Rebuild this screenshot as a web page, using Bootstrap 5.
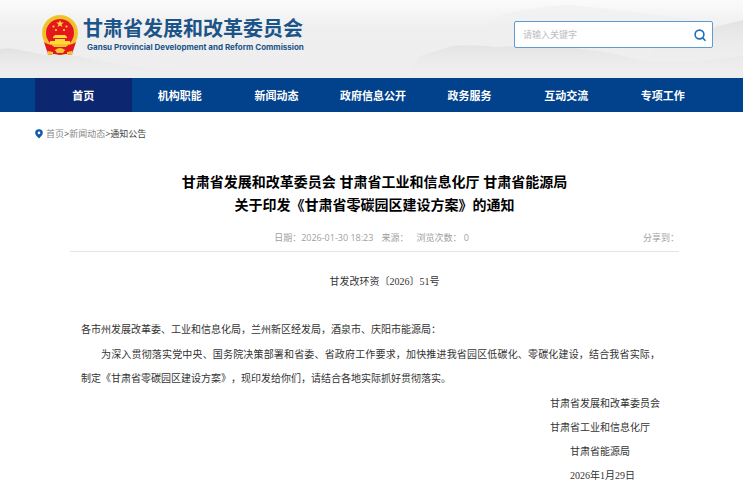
<!DOCTYPE html>
<html lang="zh-CN">
<head>
<meta charset="utf-8">
<meta name="viewport" content="width=device-width, initial-scale=1">
<title>甘肃省发展和改革委员会</title>
<link href="https://cdn.jsdelivr.net/npm/bootstrap@5.3.0/dist/css/bootstrap.min.css" rel="stylesheet">
<style>
  body { font-family: "Open Sans", "Noto Sans CJK SC", sans-serif; font-size: 9px; line-height: 12px; color: #333; background: #fff; text-spacing-trim: space-all; }
  .wrap { padding-left: 35px; padding-right: 30px; }
  .site-head { height: 78px; background: linear-gradient(#fbfbfb, #efefef 35%, #eeeeee); }
  .hills { z-index: 0; }
  .brand { color: #1a5488; padding-left: 6px; gap: 4px; margin-top: -8px; }
  .brand:hover { color: #1a5488; }
  .brand-cn { font-family: "Noto Sans CJK SC", sans-serif; font-size: 20px; line-height: 24px; font-weight: 700; }
  .brand-en { font-family: Inter, "Liberation Sans", sans-serif; font-size: 8px; line-height: 14px; font-weight: 700; padding-left: 4px; }
  .search { width: 199px; height: 27px; border: 1px solid #5e9bd0; border-radius: 2px; margin-top: -9px; }
  .search input { font-size: 9px; padding: 0 8px; color: #555; }
  .search input::placeholder { color: #bdbdbd; opacity: 1; }
  .search button { padding: 0 6px; }
  .main-nav { background: #02428d; padding-right: 32px; }
  .main-nav .nav-link { color: #fff; font-family: "Noto Sans CJK SC", sans-serif; font-size: 11px; line-height: 16px; padding: 9px 0; font-weight: 700; }
  .main-nav .nav-link.active { background: #0c2770; }
  .crumbs { padding-top: 16px; gap: 3px; }
  .crumbs a { color: #888; }
  .crumbs nav { color: #444; }
  .doc { padding: 30px 34px 0 35px; }
  .doc h1 { font-size: 14px; line-height: 23px; font-weight: 700; color: #000; }
  .meta { display: grid; grid-template-columns: 1fr auto 1fr; color: #a0a0a0; padding: 16px 0 7px; border-bottom: 1px solid #e4e4e4; }
  .meta-items { gap: 8px; padding-right: 6px; }
  .doc-text { font-family: "Liberation Serif", "Noto Sans CJK SC", serif; font-size: 10px; line-height: 24px; color: #333; padding-top: 18px; }
  .doc-text p { margin: 0; }
  .doc-no, .indent { text-indent: 2em; }
  .doc-main { padding: 24px 19px 0 11px; gap: 1px; }
  .indent { text-align: justify; }
  .signed { width: fit-content; }
</style>
</head>
<body>
<header class="site-head position-relative">
  <svg class="hills position-absolute top-0 start-0 w-100 h-100" viewBox="0 0 743 78" preserveAspectRatio="none" aria-hidden="true">
    <defs>
      <linearGradient id="mist" x1="0" y1="0" x2="0" y2="1"><stop offset="0" stop-color="#dcdcdc"/><stop offset="1" stop-color="#eeeeee" stop-opacity="0"/></linearGradient>
    </defs>
    <g fill="url(#mist)">
      <path d="M0 49Q12 47 25 51L45 55Q70 53 100 61L140 67L180 71V78H0Z" opacity=".7"/>
      <path d="M420 56Q440 50 452 46Q475 44 495 47L540 45Q580 48 610 53L650 62L700 61L743 56V78H400Z" opacity=".6"/>
      <path d="M660 42L700 32Q718 26 743 20V65H640Z" opacity=".7"/>
      <path d="M500 15Q540 6 570 5Q610 9 650 14L700 20V35H480Z" opacity=".25"/>
    </g>
  </svg>
  <div class="wrap h-100 d-flex align-items-center justify-content-between position-relative">
    <a class="brand d-flex align-items-center text-decoration-none" href="#">
      <svg width="38" height="42" viewBox="0 0 38 42" aria-hidden="true">
        <path d="M5 28H33L31 41L25 40L19 41L13 40L7 41Z" fill="#e0161c"/>
        <ellipse cx="19" cy="19" rx="18" ry="18" fill="#f4c52d"/>
        <circle cx="19" cy="19" r="16" fill="none" stroke="#e9b424" stroke-width="1" stroke-dasharray="2 1"/>
        <circle cx="19" cy="19" r="14" fill="#e5161d"/>
        <path d="M19 6l1 2.6h2.8l-2.2 1.7.8 2.7-2.4-1.6-2.4 1.6.8-2.7-2.2-1.7H18Z" fill="#ffd936"/>
        <g fill="#ffd936"><circle cx="12.5" cy="12.5" r="1.1"/><circle cx="25.5" cy="12.5" r="1.1"/><circle cx="15" cy="16" r="1.1"/><circle cx="23" cy="16" r="1.1"/>
        <path d="M12 23l2-2h10l2 2v1H12ZM14 25h10v2h5v3H9v-3h5Z"/></g>
        <path d="M3 28Q8 32 14 31Q19 35 24 31Q30 32 35 28L32 37Q25 37 19 35Q13 37 6 37Z" fill="#e5161d"/>
        <path d="M10 30H28L25 33H13Z" fill="#f2c32c"/>
        <path d="M14 36Q19 32 24 36L22 39H16Z" fill="#f4c52d"/>
        <path d="M7 37l5 1v2l-5 1ZM31 37l-5 1v2l5 1Z" fill="#f4c52d"/>
      </svg>
      <span class="d-flex flex-column">
        <span class="brand-cn">甘肃省发展和改革委员会</span>
        <span class="brand-en">Gansu Provincial Development and Reform Commission</span>
      </span>
    </a>
    <form class="search d-flex bg-white" role="search">
      <input class="form-control border-0 bg-transparent shadow-none" type="text" placeholder="请输入关键字" aria-label="请输入关键字">
      <button class="btn border-0 d-flex align-items-center" type="button" aria-label="搜索">
        <svg width="12" height="12" viewBox="0 0 12 12" fill="none" stroke="#1c6fb9" stroke-width="1.6"><circle cx="5.5" cy="5.5" r="4.4"/><path d="M8.4 8.6L11 11.3" stroke-linecap="round"/></svg>
      </button>
    </form>
  </div>
</header>
<nav class="main-nav wrap" aria-label="主导航">
  <ul class="nav nav-fill flex-nowrap">
    <li class="nav-item w-100"><a class="nav-link active" href="#" aria-current="page">首页</a></li>
    <li class="nav-item w-100"><a class="nav-link" href="#">机构职能</a></li>
    <li class="nav-item w-100"><a class="nav-link" href="#">新闻动态</a></li>
    <li class="nav-item w-100"><a class="nav-link" href="#">政府信息公开</a></li>
    <li class="nav-item w-100"><a class="nav-link" href="#">政务服务</a></li>
    <li class="nav-item w-100"><a class="nav-link" href="#">互动交流</a></li>
    <li class="nav-item w-100"><a class="nav-link" href="#">专项工作</a></li>
  </ul>
</nav>
<main class="wrap">
  <div class="crumbs d-flex align-items-center">
    <svg width="8" height="10" viewBox="0 0 8 10" aria-hidden="true"><path d="M4 0.3A3.7 3.7 0 0 1 7.8 4C7.8 6.2 5.3 8 4 9.6C2.7 8 .2 6.2 .2 4A3.7 3.7 0 0 1 4 .3Z" fill="#0b5cab"/><circle cx="4" cy="3.9" r="1.3" fill="#fff"/></svg>
    <nav aria-label="当前位置"><a class="text-decoration-none" href="#">首页</a>&gt;<a class="text-decoration-none" href="#">新闻动态</a>&gt;<span>通知公告</span></nav>
  </div>
  <article class="doc">
    <h1 class="text-center mb-0">甘肃省发展和改革委员会 甘肃省工业和信息化厅 甘肃省能源局<br>关于印发《甘肃省零碳园区建设方案》的通知</h1>
    <div class="meta">
      <span></span>
      <div class="meta-items d-flex"><span>日期：2026-01-30 18:23</span><span>来源：</span><span>浏览次数： 0</span></div>
      <span class="text-end">分享到：</span>
    </div>
    <div class="doc-text">
      <p class="doc-no text-center">甘发改环资〔2026〕51号</p>
      <div class="doc-main d-flex flex-column">
        <p>各市州发展改革委、工业和信息化局，兰州新区经发局，酒泉市、庆阳市能源局：</p>
        <p class="indent">为深入贯彻落实党中央、国务院决策部署和省委、省政府工作要求，加快推进我省园区低碳化、零碳化建设，结合我省实际，制定《甘肃省零碳园区建设方案》，现印发给你们，请结合各地实际抓好贯彻落实。</p>
        <div class="signed ms-auto">
          <p>甘肃省发展和改革委员会</p>
          <p>甘肃省工业和信息化厅</p>
          <p class="indent">甘肃省能源局</p>
          <p class="indent">2026年1月29日</p>
        </div>
      </div>
    </div>
  </article>
</main>
<script src="https://cdn.jsdelivr.net/npm/bootstrap@5.3.0/dist/js/bootstrap.bundle.min.js"></script>
</body>
</html>
